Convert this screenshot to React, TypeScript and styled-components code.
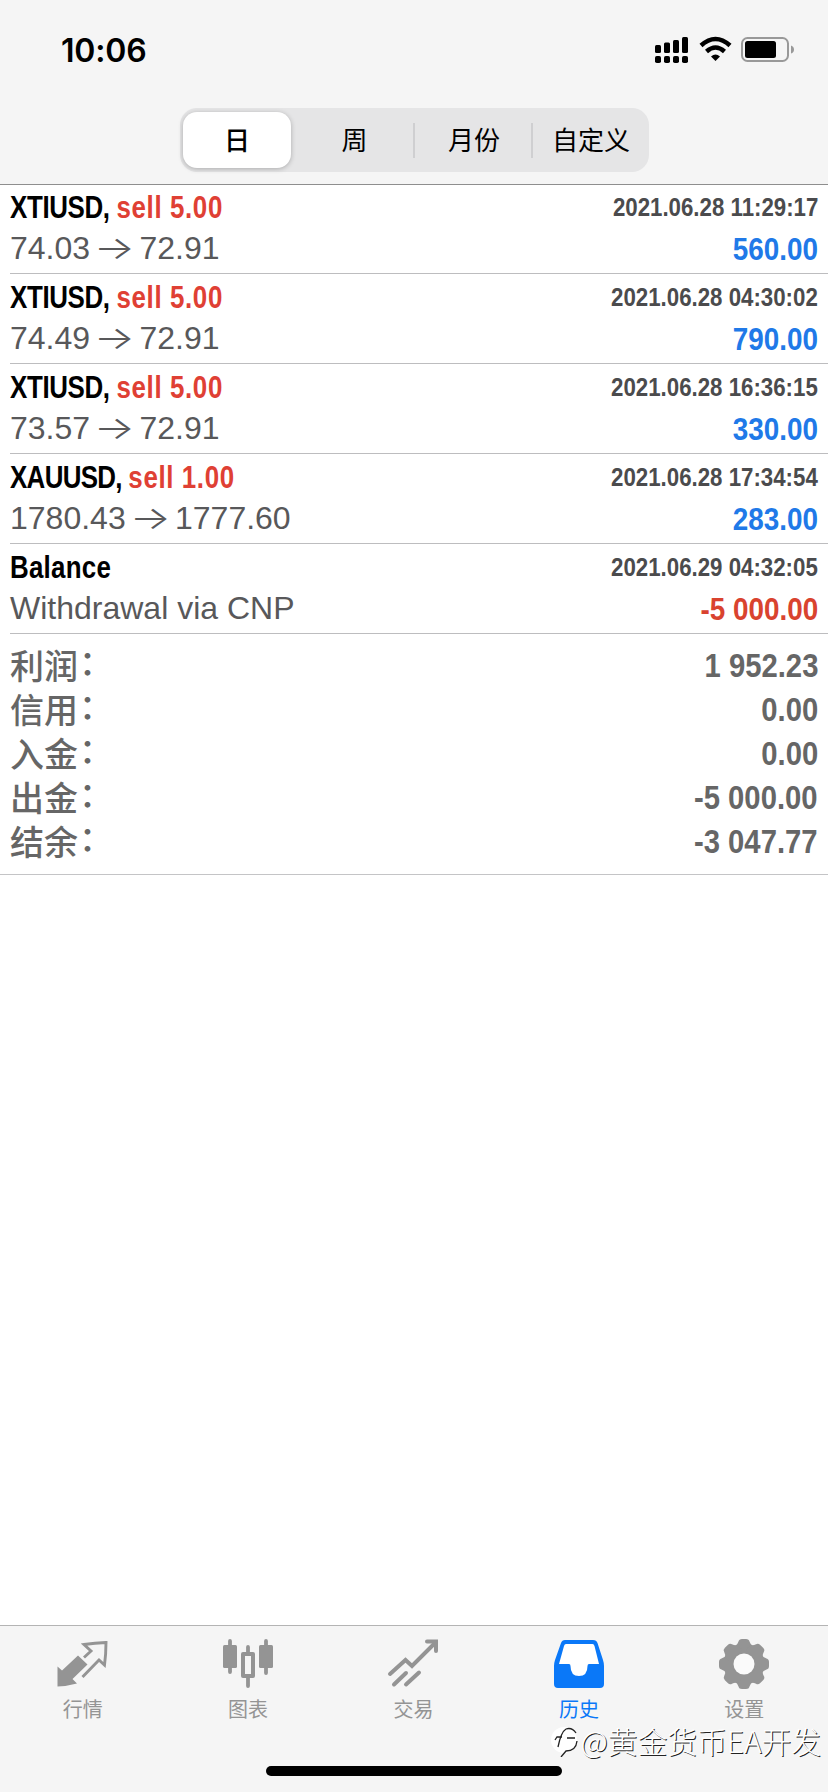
import React from "react";
import styled, { createGlobalStyle } from "styled-components";

const GlobalStyle = createGlobalStyle`
  * { box-sizing: border-box; }
  html, body { margin: 0; padding: 0; background: #fff; }
  body { font-family: "Liberation Sans", "Noto Sans CJK SC", sans-serif; }
`;

const cjk = `"Noto Sans CJK SC", sans-serif`;
const sans = `"Liberation Sans", sans-serif`;

const Screen = styled.div`
  width: 828px;
  height: 1792px;
  display: flex;
  flex-direction: column;
  background: #fff;
  overflow: hidden;
`;

const Header = styled.header`
  height: 185px;
  background: #f5f5f5;
  border-bottom: 1px solid #8e8e8e;
  display: flex;
  flex-direction: column;
  align-items: center;
`;

const StatusBar = styled.div`
  width: 100%;
  height: 108px;
  padding: 33px 33px 0 61px;
  display: flex;
  justify-content: space-between;
  align-items: flex-start;
`;

const Clock = styled.div`
  font: 600 32px/36px Inter, sans-serif;
  letter-spacing: -0.2px;
  color: #000;
`;

const StatusIcons = styled.svg`
  display: block;
  margin-top: 3px;
`;

const Segmented = styled.div`
  width: 469px;
  height: 64px;
  margin-left: 1px;
  padding: 4px 3px;
  border-radius: 17px;
  background: #e5e5e6;
  display: flex;
  align-items: center;
`;

const Segment = styled.button<{ $active?: boolean; $divider?: boolean; $width: number; $indent?: number }>`
  width: ${(p) => p.$width}px;
  height: ${(p) => (p.$active ? 56 : 35)}px;
  margin: 0;
  padding: 0 0 3px ${(p) => p.$indent ?? 0}px;
  border: 0;
  border-right: ${(p) => (p.$divider ? "2px solid #cfcfd1" : "0")};
  border-radius: ${(p) => (p.$active ? "14px" : "0")};
  background: ${(p) => (p.$active ? "#fff" : "transparent")};
  box-shadow: ${(p) => (p.$active ? "0 1px 5px rgba(0,0,0,0.25)" : "none")};
  font: ${(p) => (p.$active ? 500 : 400)} 26px/32px ${cjk};
  color: #000;
`;

const DealList = styled.div`
  margin-top: -1px;
`;

const DealRow = styled.div`
  height: 90px;
  margin-left: 10px;
  padding: 5px 10px 0 0;
  border-bottom: 1px solid #bdbdbf;
`;

const Line = styled.div<{ $height: number }>`
  height: ${(p) => p.$height}px;
  display: flex;
  justify-content: space-between;
  align-items: center;
  white-space: pre;
`;

const Title = styled.span`
  display: block;
  transform: scaleX(0.81);
  transform-origin: left center;
`;

const Instrument = styled.span<{ $spacing: number }>`
  font: bold 32px/36px ${sans};
  letter-spacing: ${(p) => p.$spacing}px;
  color: #000;
`;

const Side = styled.span`
  font: bold 32px/36px ${sans};
  letter-spacing: 0.75px;
  color: #df4034;
`;

const DateText = styled.span`
  font: bold 25.5px/36px ${sans};
  transform: scaleX(0.873);
  transform-origin: right center;
  color: #4b4b4d;
`;

const Detail = styled.span`
  font: 32px/40px ${sans};
  padding-top: 2px;
  color: #58585a;
`;

const Arrow = styled.span`
  display: inline-block;
  margin-right: 1px;
  font: 300 32px/36px Inter, sans-serif;
  transform: scaleX(1.35);
`;

const Amount = styled.span<{ $negative?: boolean }>`
  font: bold 32px/40px ${sans};
  padding-top: 4px;
  transform: scaleX(0.87);
  transform-origin: right center;
  color: ${(p) => (p.$negative ? "#d9432f" : "#2079e8")};
`;

const Summary = styled.section`
  height: 241px;
  padding: 10px 10px 0 10px;
  border-bottom: 1px solid #c4c4c6;
`;

const SummaryLabel = styled.span`
  font: 500 34px/44px ${cjk};
  padding-bottom: 2px;
  color: #666;
`;

const Colon = styled.span`
  display: inline-block;
  margin-left: 1px;
  line-height: 36px;
  vertical-align: 4px;
`;

const SummaryValue = styled.span`
  font: bold 33.5px/44px ${sans};
  transform: scaleX(0.873);
  transform-origin: right center;
  color: #666;
`;

const Spacer = styled.div`
  flex: 1;
`;

const Footer = styled.footer`
  position: relative;
  height: 167px;
  border-top: 1px solid #b4b4b4;
  background: #f5f5f5;
  display: flex;
  flex-direction: column;
  align-items: center;
  justify-content: space-between;
  padding-bottom: 16px;
`;

const Tabs = styled.nav`
  width: 100%;
  padding-right: 1px;
  display: grid;
  grid-template-columns: repeat(5, 1fr);
`;

const Tab = styled.div<{ $active?: boolean }>`
  padding-top: 12px;
  display: flex;
  flex-direction: column;
  align-items: center;
  color: ${(p) => (p.$active ? "#0a78f8" : "#949494")};
  font: 400 20px/28px ${cjk};
  svg { display: block; margin-bottom: 5px; }
`;

const HomeIndicator = styled.div`
  width: 296px;
  height: 10px;
  border-radius: 5px;
  background: #000;
`;

const Watermark = styled.div`
  position: absolute;
  right: 7px;
  top: 96px;
  display: flex;
  align-items: center;
  font: 300 29.8px/36px ${cjk};
  color: #fff;
  text-shadow: 1px 1px 0.5px #222;
  white-space: nowrap;
`;

const deals = [
  { symbol: "XTIUSD,", spacing: -0.45, side: "sell 5.00", from: "74.03", to: "72.91", date: "2021.06.28 11:29:17", amount: "560.00" },
  { symbol: "XTIUSD,", spacing: -0.45, side: "sell 5.00", from: "74.49", to: "72.91", date: "2021.06.28 04:30:02", amount: "790.00" },
  { symbol: "XTIUSD,", spacing: -0.45, side: "sell 5.00", from: "73.57", to: "72.91", date: "2021.06.28 16:36:15", amount: "330.00" },
  { symbol: "XAUUSD,", spacing: -0.85, side: "sell 1.00", from: "1780.43", to: "1777.60", date: "2021.06.28 17:34:54", amount: "283.00" },
];

const summary = [
  ["利润", "1 952.23"],
  ["信用", "0.00"],
  ["入金", "0.00"],
  ["出金", "-5 000.00"],
  ["结余", "-3 047.77"],
];

const QuotesIcon = () => (
  <svg width="52" height="52" viewBox="0 0 52 52" fill="none">
    <path d="M21 17.500 L30.500 26.500 L15.500 41 L20 45.500 Q11 48 0.500 48.500 V28.500 L5 32.500 Z" fill="currentColor" />
    <path d="M27 19.500 L34 13 L27 6.500 Q38 5 49 4.500 Q49 16 47.500 27 L42 22 L25.500 39" stroke="currentColor" strokeWidth="2.900" />
  </svg>
);

const ChartIcon = () => (
  <svg width="52" height="52" viewBox="0 0 52 52" fill="none">
    <g fill="currentColor">
      <rect x="1" y="7" width="14" height="23" rx="1.500" />
      <rect x="37" y="7" width="14" height="23" rx="1.500" />
    </g>
    <path d="M8 3V34M44 3V35M26 9V15M26 40V48" stroke="currentColor" strokeWidth="3.800" strokeLinecap="round" />
    <rect x="21" y="16" width="10" height="22" stroke="currentColor" strokeWidth="4" strokeLinejoin="round" />
  </svg>
);

const TradeIcon = () => (
  <svg width="52" height="52" viewBox="0 0 52 52" fill="none" stroke="currentColor" strokeWidth="4" strokeLinecap="round">
    <path d="M3 36L18.500 22L25 28L49 4" />
    <path d="M40 3.500H49V13" />
    <path d="M7 46.500L19 35M19 46.500L32 34.500" />
  </svg>
);

const HistoryIcon = () => (
  <svg width="52" height="52" viewBox="0 0 52 52">
    <path fill="currentColor" d="M12 2H40Q43.500 2 44.500 5L50 22Q51 25 51 28V46Q51 50 47 50H5Q1 50 1 46V28Q1 25 2 22L8 5Q9 2 12 2Z" />
    <path fill="#fff" d="M13 6Q11.500 6 11 8L6 26H16Q17.500 26 17.500 28Q17.500 38 26 38Q34.500 38 34.500 28Q34.500 26 36 26H46L41.500 8Q41 6 39.500 6Z" />
  </svg>
);

const SettingsIcon = () => (
  <svg width="52" height="52" viewBox="0 0 52 52" fill="currentColor">
    <circle cx="26" cy="26" r="20" />
    {[0, 45, 90, 135, 180, 225, 270, 315].map((angle) => (
      <path key={angle} transform={`rotate(${angle} 26 26)`} d="M17 8Q19.500 7 20.500 3.500Q21 1 24 1H28Q31 1 31.500 3.500Q32.500 7 35 8V14H17Z" />
    ))}
    <circle cx="26" cy="26" r="10.500" fill="#fafafa" />
  </svg>
);

const StatusGlyphs = () => (
  <StatusIcons width="140" height="28" viewBox="0 0 140 28">
    <rect x="0" y="9" width="6" height="8" rx="1.500" />
    <rect x="9" y="6.500" width="6" height="10.500" rx="1.500" />
    <rect x="18" y="4" width="6" height="13" rx="1.500" />
    <rect x="27" y="1" width="6" height="16" rx="1.500" />
    {[0, 9, 18, 27].map((x) => (
      <rect key={x} x={x} y="20" width="6" height="7" rx="1.800" />
    ))}
    <g fill="none" stroke="#000" strokeWidth="4.500">
      <path d="M46 9.500Q60.500 -3.500 75 9.500" />
      <path d="M51.500 15.500Q60.500 7.500 69.500 15.500" />
    </g>
    <path d="M56 20.500Q60.500 16.500 65 20.500L60.500 25Z" />
    <rect x="87" y="2" width="46" height="23" rx="5.500" fill="none" stroke="#999" strokeWidth="2" />
    <rect x="90" y="5" width="31" height="17" rx="2.500" />
    <path d="M136 9.500Q139 10.500 139 13.500Q139 16.500 136 17.500Z" fill="#999" />
  </StatusIcons>
);

const WatermarkLogo = () => (
  <svg width="30" height="34" viewBox="0 0 30 34" fill="none">
    <circle cx="13" cy="17" r="13" fill="#fff" />
    <path d="M4 17L6 14H11M15 6Q10 9 7 24M16 15H24M26 18Q25 28 15 28L10 34M15 6Q21 4 25 10" stroke="#222" strokeWidth="1.300" />
  </svg>
);

export default function App() {
  return (
    <Screen>
      <GlobalStyle />
      <Header>
        <StatusBar>
          <Clock>10:06</Clock>
          <StatusGlyphs />
        </StatusBar>
        <Segmented>
          <Segment $active $width={108}>日</Segment>
          <Segment $divider $width={124} $indent={5}>周</Segment>
          <Segment $divider $width={118} $indent={2}>月份</Segment>
          <Segment $width={113} $indent={3}>自定义</Segment>
        </Segmented>
      </Header>
      <DealList>
        {deals.map((d) => (
          <DealRow key={d.date}>
            <Line $height={36}>
              <Title>
                <Instrument $spacing={d.spacing}>{d.symbol} </Instrument>
                <Side>{d.side}</Side>
              </Title>
              <DateText>{d.date}</DateText>
            </Line>
            <Line $height={44}>
              <Detail>
                {d.from} <Arrow>→</Arrow> {d.to}
              </Detail>
              <Amount>{d.amount}</Amount>
            </Line>
          </DealRow>
        ))}
        <DealRow>
          <Line $height={36}>
            <Title>
              <Instrument $spacing={0.3}>Balance</Instrument>
            </Title>
            <DateText>2021.06.29 04:32:05</DateText>
          </Line>
          <Line $height={44}>
            <Detail>Withdrawal via CNP</Detail>
            <Amount $negative>-5 000.00</Amount>
          </Line>
        </DealRow>
      </DealList>
      <Summary>
        {summary.map(([label, value]) => (
          <Line key={label} $height={44}>
            <SummaryLabel>
              {label}
              <Colon>：</Colon>
            </SummaryLabel>
            <SummaryValue>{value}</SummaryValue>
          </Line>
        ))}
      </Summary>
      <Spacer />
      <Footer>
        <Tabs>
          <Tab><QuotesIcon />行情</Tab>
          <Tab><ChartIcon />图表</Tab>
          <Tab><TradeIcon />交易</Tab>
          <Tab $active><HistoryIcon />历史</Tab>
          <Tab><SettingsIcon />设置</Tab>
        </Tabs>
        <HomeIndicator />
        <Watermark>
          <WatermarkLogo />
          @黄金货币EA开发
        </Watermark>
      </Footer>
    </Screen>
  );
}
